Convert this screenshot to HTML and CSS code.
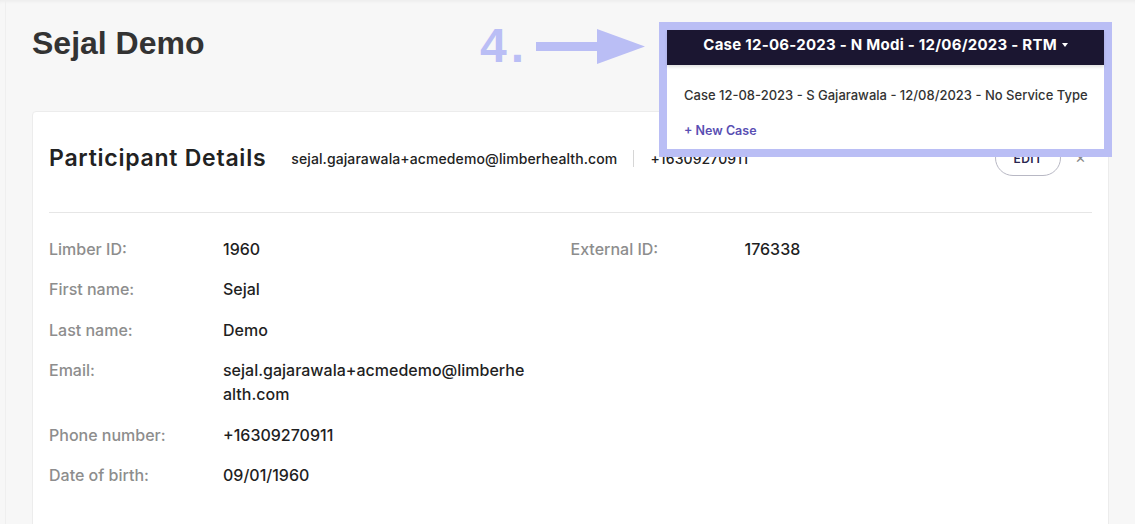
FILE: index.html
```html
<!DOCTYPE html>
<html lang="en">
<head>
<meta charset="utf-8">
<title>Sejal Demo</title>
<link rel="stylesheet" href="styles.css">
</head>
<body>
<div class="page">
  <header class="page-head">
    <h1 class="page-title">Sejal Demo</h1>
  </header>
  <section class="card">
    <div class="card-head">
      <h2 class="card-title">Participant Details</h2>
      <span class="contact">sejal.gajarawala+acmedemo@limberhealth.com</span>
      <span class="sep"></span>
      <span class="contact">+16309270911</span>
      <div class="actions">
        <button class="edit-btn">EDIT</button>
        <span class="close-btn">&#x2715;</span>
      </div>
    </div>
    <div class="details">
      <div class="col">
        <div class="row"><span class="label">Limber ID:</span><span class="value">1960</span></div>
        <div class="row"><span class="label">First name:</span><span class="value">Sejal</span></div>
        <div class="row"><span class="label">Last name:</span><span class="value">Demo</span></div>
        <div class="row"><span class="label">Email:</span><span class="value wrap">sejal.gajarawala+acmedemo@limberhealth.com</span></div>
        <div class="row"><span class="label">Phone number:</span><span class="value">+16309270911</span></div>
        <div class="row"><span class="label">Date of birth:</span><span class="value">09/01/1960</span></div>
      </div>
      <div class="col">
        <div class="row"><span class="label">External ID:</span><span class="value">176338</span></div>
      </div>
    </div>
  </section>
</div>

<div class="step-num">4.</div>
<svg class="step-arrow" width="110" height="36" viewBox="0 0 110 36" aria-hidden="true">
  <rect x="0" y="13" width="64" height="9" fill="#babef5"/>
  <polygon points="61,0 109,17.5 61,35" fill="#babef5"/>
</svg>

<div class="case-menu">
  <div class="case-current">Case 12-06-2023 - N Modi - 12/06/2023 - RTM <span class="caret"></span></div>
  <ul class="case-list">
    <li class="case-item">Case 12-08-2023 - S Gajarawala - 12/08/2023 - No Service Type</li>
    <li class="case-new">+ New Case</li>
  </ul>
</div>
</body>
</html>
```

FILE: styles.css
```css
* { box-sizing: border-box; }

html, body {
  margin: 0;
  padding: 0;
  background: #f7f7f7;
}

body {
  font-family: Inter, "Noto Sans", sans-serif;
  color: #222;
  height: 524px;
  overflow: hidden;
  box-shadow: inset 0 4px 4px -3px rgba(0,0,0,0.06);
}

.page {
  margin-left: 5px;
  border-left: 1px solid #efefef;
  padding: 24px 26px 0 26px;
  min-height: 524px;
}

.page-head {
  height: 87px;
}

.page-title {
  margin: 0;
  font-family: "Liberation Sans", Arial, sans-serif;
  font-weight: 700;
  font-size: 32px;
  line-height: 38px;
  color: #333;
}

.card {
  background: #fff;
  border: 1px solid #ececec;
  border-radius: 4px;
  padding: 28px 16px 60px;
  min-height: 440px;
}

.card-head {
  display: flex;
  align-items: center;
  padding-bottom: 36px;
  border-bottom: 1px solid #e6e6e6;
  height: 73px;
}

.card-title {
  margin: 0 25px 0 0;
  font-size: 23px;
  font-weight: 600;
  line-height: 36px;
  color: #222;
  letter-spacing: 0.75px;
}

.contact {
  font-size: 14px;
  font-weight: 500;
  color: #222;
  letter-spacing: 0.1px;
}

.sep {
  width: 1px;
  height: 17px;
  background: #d6d6d6;
  margin: 0 16px;
}

.actions {
  margin-left: auto;
  display: flex;
  align-items: center;
  gap: 14px;
  margin-right: 6px;
}

.edit-btn {
  width: 66px;
  height: 36px;
  border: 1px solid #b8b8c4;
  border-radius: 18px;
  background: #fff;
  font-family: Inter, sans-serif;
  font-size: 12px;
  font-weight: 600;
  color: #2a2550;
  letter-spacing: 0.5px;
}

.close-btn {
  font-size: 13px;
  color: #888;
}

.details {
  display: grid;
  grid-template-columns: 1fr 1fr;
  padding-top: 24px;
}

.col {
  display: flex;
  flex-direction: column;
  gap: 16.4px;
}

.row {
  display: grid;
  grid-template-columns: 174px 1fr;
  font-size: 16px;
  font-weight: 500;
  line-height: 24px;
}

.label {
  color: #8d8d8d;
}

.value {
  color: #1f1f1f;
  max-width: 308px;
}

.value.wrap {
  word-break: break-all;
}

/* annotation */
.step-num {
  position: absolute;
  left: 480px;
  top: 19px;
  font-family: "Liberation Sans", Arial, sans-serif;
  font-weight: 700;
  font-size: 48px;
  line-height: 54px;
  letter-spacing: 4px;
  color: #babef5;
}

.step-arrow {
  position: absolute;
  left: 536px;
  top: 29px;
}

.case-menu {
  position: absolute;
  left: 659px;
  top: 22px;
  width: 453px;
  height: 135px;
  border: 8px solid #babef5;
  background: #fff;
}

.case-current {
  height: 35px;
  background: #1b1631;
  color: #fff;
  font-size: 15px;
  font-weight: 700;
  line-height: 30px;
  text-align: center;
  letter-spacing: 0.25px;
  box-shadow: 0 2px 3px rgba(0,0,0,0.12);
}

.caret {
  display: inline-block;
  width: 0;
  height: 0;
  border-left: 3.5px solid transparent;
  border-right: 3.5px solid transparent;
  border-top: 4px solid #fff;
  vertical-align: 3px;
  margin-left: 1px;
}

.case-list {
  list-style: none;
  margin: 0;
  padding: 22px 0 0 17px;
  font-size: 13px;
  line-height: 17px;
}

.case-item {
  color: #333;
  font-weight: 500;
}

.case-new {
  margin-top: 18px;
  font-size: 12.5px;
  color: #5a4fb3;
  font-weight: 600;
}
```
